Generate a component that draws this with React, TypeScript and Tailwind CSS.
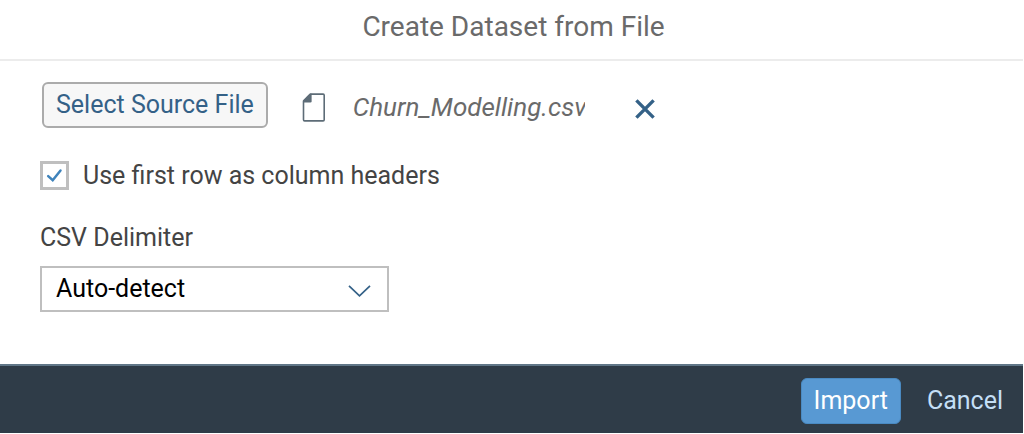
import { useState } from "react";

function FileIcon() {
  return (
    <svg width="24" height="30" viewBox="0 0 24 30" fill="none" aria-hidden="true">
      <path d="M8.5 2.1H21.1Q22.2 2.1 22.2 3.2V27.8Q22.2 28.9 21.1 28.9H2.6Q1.5 28.9 1.5 27.8V9.1Z" stroke="#5d6c77" strokeWidth="1.6" />
      <path d="M7.6 1.8L9.6 1.8V9.2Q9.6 10.4 8.4 10.4H1.2V8.2Z" fill="#5d6c77" />
    </svg>
  );
}

function CloseIcon() {
  return (
    <svg width="22" height="22" viewBox="0 0 22 22" fill="none" aria-hidden="true">
      <path d="M2.4 2.4L19.6 19.6M19.6 2.4L2.4 19.6" stroke="#346187" strokeWidth="3.4" />
    </svg>
  );
}

export default function App() {
  const [file, setFile] = useState<string | null>("Churn_Modelling.csv");
  const [headers, setHeaders] = useState(true);

  return (
    <div className="flex min-h-screen flex-col bg-white pb-px pr-px font-['Roboto','Noto_Sans',sans-serif] text-[25px] leading-7 text-[#444444]">
      <header className="border-b-2 border-[#ececec] px-10 pb-4 pt-[11px]">
        <h1 className="pl-1 text-center text-[28px] leading-8 text-[#6a6a6a]">Create Dataset from File</h1>
      </header>

      <main className="flex grow flex-col items-start px-10 pb-4 pt-[21px]">
        <div className="flex items-center pl-0.5">
          <button
            type="button"
            onClick={() => setFile("Churn_Modelling.csv")}
            className="rounded-md border-2 border-[#ababab] bg-[#f7f7f7] px-3 py-[7px] text-[#346187]"
          >
            Select Source File
          </button>
          {file && (
            <div className="flex items-center pl-[34px] pt-1">
              <FileIcon />
              <span className="ml-[27px] w-[232px] overflow-hidden whitespace-nowrap text-[26px] italic text-[#6a6a6a]">{file}</span>
              <button type="button" aria-label="Remove file" onClick={() => setFile(null)} className="ml-[49px] pt-1">
                <CloseIcon />
              </button>
            </div>
          )}
        </div>

        <label className="mt-8 flex items-center gap-3.5 pt-px">
          <span className="relative flex">
            <input
              type="checkbox"
              checked={headers}
              onChange={(e) => setHeaders(e.target.checked)}
              className="peer size-[29px] appearance-none border-3 border-[#bfbfbf] bg-white"
            />
            <svg
              className="pointer-events-none absolute inset-0 hidden size-[29px] peer-checked:block"
              viewBox="0 0 28 28"
              fill="none"
              aria-hidden="true"
            >
              <path d="M7.9 14.6L12.3 18.6L19.8 9.2" stroke="#3f83bb" strokeWidth="2.4" strokeLinecap="round" />
            </svg>
          </span>
          Use first row as column headers
        </label>

        <label htmlFor="delimiter" className="mt-[34px]">
          CSV Delimiter
        </label>
        <div className="relative mt-3.5 w-[349px]">
          <select
            id="delimiter"
            defaultValue="auto"
            className="block w-full appearance-none border-2 border-[#bfbfbf] bg-white px-3.5 py-[7px] text-black"
          >
            <option value="auto">Auto-detect</option>
            <option value="comma">Comma</option>
            <option value="semicolon">Semicolon</option>
            <option value="tab">Tab</option>
          </select>
          <svg
            className="pointer-events-none absolute right-4 top-4"
            width="26"
            height="18"
            viewBox="0 0 26 18"
            fill="none"
            aria-hidden="true"
          >
            <path d="M2 3.8L12.5 13.8L23 3.8" stroke="#346187" strokeWidth="1.7" />
          </svg>
        </div>
      </main>

      <footer className="flex items-center justify-end gap-3.5 border-t-2 border-[#607687] bg-[#2f3c48] px-2 pb-[9px] pt-3 text-shadow-[0_0_2px_rgb(0_0_0/0.5)]">
        <button type="button" className="rounded-md border border-[#4a8ac2] bg-[#5899d3] px-3 py-2 text-white">
          Import
        </button>
        <button type="button" className="px-3 py-2 text-[#c4dff6]">
          Cancel
        </button>
      </footer>
    </div>
  );
}
